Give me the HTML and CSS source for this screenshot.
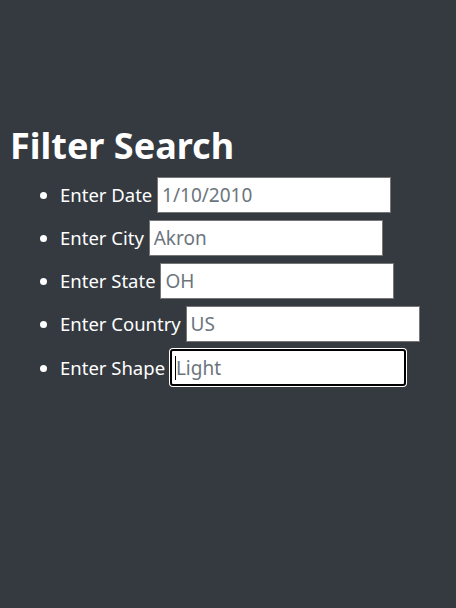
FILE: index.html
```html
<!DOCTYPE html>
<html>
<head>
<meta charset="utf-8">
<link rel="stylesheet" href="styles.css">
</head>
<body>
<div class="page">
  <h1 class="title">Filter Search</h1>
  <ul class="filters">
    <li class="filter"><label class="label">Enter Date</label> <input class="field" type="text" placeholder="1/10/2010"></li>
    <li class="filter"><label class="label">Enter City</label> <input class="field" type="text" placeholder="Akron"></li>
    <li class="filter"><label class="label">Enter State</label> <input class="field" type="text" placeholder="OH"></li>
    <li class="filter"><label class="label">Enter Country</label> <input class="field" type="text" placeholder="US"></li>
    <li class="filter"><label class="label">Enter Shape</label> <span class="field-wrap"><input class="field focused" type="text" placeholder="Light"><span class="caret"></span></span></li>
  </ul>
</div>
</body>
</html>
```

FILE: styles.css
```css
html, body {
  margin: 0;
  padding: 0;
  background: #343a40;
  height: 100%;
}
.page {
  padding: 124px 10px 0 10px;
  font-family: "Noto Sans", "Open Sans", sans-serif;
  color: #ffffff;
}
.title {
  margin: 0 0 9px 0;
  font-size: 36px;
  font-weight: 700;
  line-height: 44px;
}
.filters {
  margin: 0;
  padding: 0 0 0 50px;
  list-style: disc;
}
.filter {
  font-size: 18.5px;
  line-height: 36px;
  height: 36px;
  margin-bottom: 7px;
}
.field-wrap {
  position: relative;
  display: inline-block;
}
.field {
  box-sizing: border-box;
  width: 234px;
  height: 36px;
  margin: 0;
  padding: 0 4px;
  border: 1px solid #767676;
  background: #ffffff;
  font-family: "Noto Sans", "Open Sans", sans-serif;
  font-size: 19px;
  color: #495057;
  vertical-align: baseline;
  outline: none;
}
.field::placeholder {
  color: #6c757d;
}
.field.focused {
  width: 236px;
  height: 37px;
  border: 2px solid #000000;
  border-radius: 3px;
  box-shadow: 0 0 0 1px #ffffff;
}
.caret {
  position: absolute;
  left: 5px;
  top: 7px;
  width: 1px;
  height: 24px;
  background: #000000;
}
```
